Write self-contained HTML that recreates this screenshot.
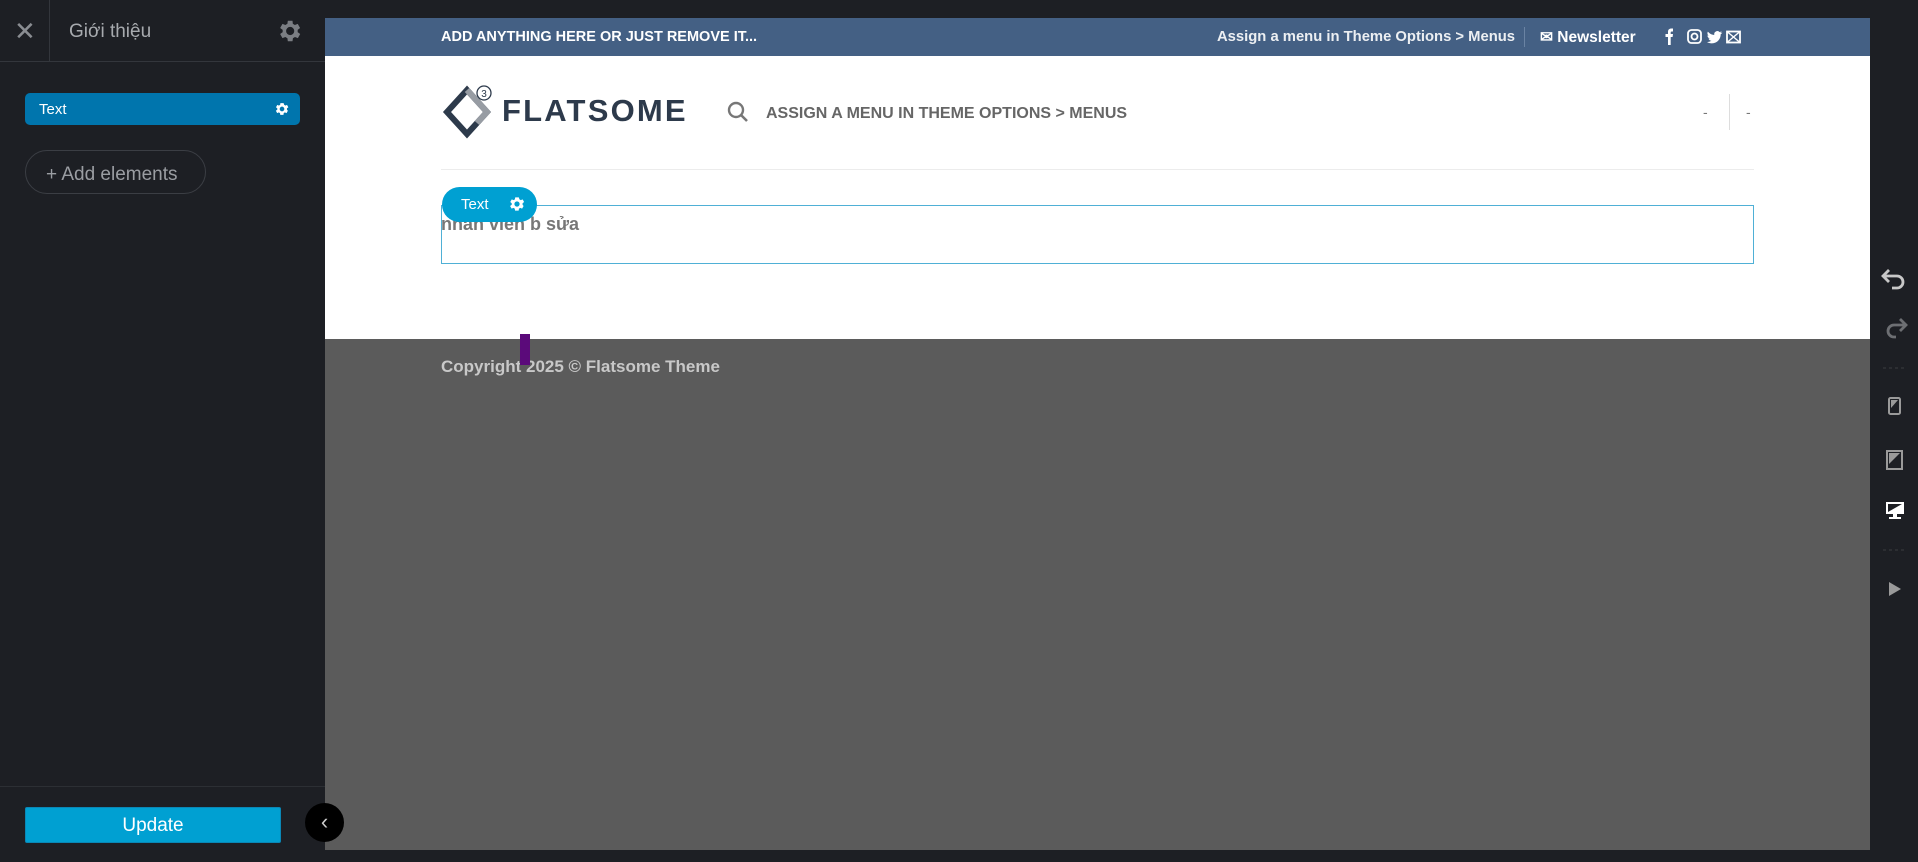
<!DOCTYPE html>
<html><head><meta charset="utf-8"><style>
*{margin:0;padding:0;box-sizing:border-box}
body{width:1918px;height:862px;background:#1d1f24;font-family:"Liberation Sans","Noto Sans CJK SC",sans-serif;position:relative;overflow:hidden}
.abs{position:absolute}
</style></head><body>
<!-- sidebar -->
<div class="abs" style="left:0;top:0;width:325px;height:862px;background:#1d1f24"></div>
<div class="abs" style="left:0;top:61px;width:325px;height:1px;background:#33363c"></div>
<div class="abs" style="left:49px;top:0;width:1px;height:61px;background:#33363c"></div>
<div class="abs" style="left:14px;top:16px;color:#8a8d92;font-size:26px;line-height:30px">✕</div>
<div class="abs" style="left:69px;top:21px;color:#a7aaae;font-size:19px">Giới thiệu</div>
<svg class="abs" style="left:275px;top:17px" width="28" height="28" viewBox="0 0 24 24"><path fill="#7b7e83" d="M19.4 13a7.5 7.5 0 000-2l2.1-1.6-2-3.5-2.5 1a7.4 7.4 0 00-1.7-1L15 3.2h-4l-.4 2.7a7.4 7.4 0 00-1.7 1l-2.5-1-2 3.5L6.6 11a7.5 7.5 0 000 2l-2.2 1.6 2 3.5 2.5-1a7.4 7.4 0 001.7 1l.4 2.7h4l.4-2.7a7.4 7.4 0 001.7-1l2.5 1 2-3.5zM13 15.5a3.5 3.5 0 110-7 3.5 3.5 0 010 7z"/></svg>
<div class="abs" style="left:25px;top:93px;width:275px;height:32px;background:#0075ad;border-radius:5px;color:#fff;font-size:15px;line-height:34px;padding-left:14px">Text</div>
<svg class="abs" style="left:274px;top:101px" width="16" height="16" viewBox="0 0 24 24"><path fill="#fff" d="M19.4 13a7.5 7.5 0 000-2l2.1-1.6-2-3.5-2.5 1a7.4 7.4 0 00-1.7-1L14.4 3.2h-4.8l-.4 2.7a7.4 7.4 0 00-1.7 1l-2.5-1-2 3.5L5 11a7.5 7.5 0 000 2l-2.2 1.6 2 3.5 2.5-1a7.4 7.4 0 001.7 1l.4 2.7h4.8l.4-2.7a7.4 7.4 0 001.7-1l2.5 1 2-3.5zM12 15.5a3.5 3.5 0 110-7 3.5 3.5 0 010 7z"/></svg>
<div class="abs" style="left:25px;top:150px;width:181px;height:44px;border:1px solid #3b3e44;border-radius:22px;color:#9a9da2;font-size:19px;line-height:47px;padding-left:20px">+ Add elements</div>
<div class="abs" style="left:0;top:786px;width:325px;height:1px;background:#2c2f34"></div>
<div class="abs" style="left:25px;top:807px;width:256px;height:36px;background:#00a0d2;border:1px solid #0a87b6;border-radius:2px;color:#fff;font-size:19px;line-height:36px;text-align:center">Update</div>
<!-- canvas -->
<div class="abs" style="left:325px;top:18px;width:1545px;height:832px;background:#5b5b5b"></div>
<div class="abs" style="left:325px;top:18px;width:1545px;height:38px;background:#446084"></div>
<div class="abs" style="left:441px;top:29px;color:#fff;font-size:14.5px;font-weight:bold">ADD ANYTHING HERE OR JUST REMOVE IT...</div>
<div class="abs" style="left:1217px;top:29px;color:#fff;font-size:14.8px;font-weight:bold;opacity:.9">Assign a menu in Theme Options &gt; Menus</div>
<div class="abs" style="left:1524px;top:27px;width:1px;height:20px;background:#6a83a3"></div>
<div class="abs" style="left:1540px;top:28px;color:#fff;font-size:15.5px;font-weight:bold">✉ Newsletter</div>
<svg class="abs" style="left:1660px;top:27px" width="82" height="20" viewBox="0 0 82 20">
<path d="M8 18V10H5.5V7H8V5c0-2.5 1.3-3.5 3.5-3.5H13V4.5h-1.2c-.9 0-1.1.4-1.1 1.1V7H13l-.4 3h-1.9v8z" fill="#fff"/>
<rect x="28" y="3" width="13" height="13" rx="3.5" fill="none" stroke="#fff" stroke-width="1.8"/><circle cx="34.5" cy="9.5" r="3" fill="none" stroke="#fff" stroke-width="1.8"/>
<path d="M62 5.5c-.6.3-1.2.4-1.8.5.7-.4 1.1-1 1.4-1.7-.6.4-1.3.6-2 .8a3.1 3.1 0 00-5.3 2.8c-2.6-.1-4.9-1.4-6.4-3.3-.9 1.5-.4 3.3.9 4.2-.5 0-1-.2-1.4-.4 0 1.5 1.1 2.8 2.5 3.1-.5.1-.9.2-1.4.1.4 1.3 1.6 2.1 2.9 2.2A6.3 6.3 0 0147 15c1.4.9 3 1.4 4.8 1.4 5.8 0 9-4.8 8.9-9.1.6-.5 1.1-1 1.5-1.6z" fill="#fff"/>
<rect x="67" y="4.5" width="13" height="11" fill="none" stroke="#fff" stroke-width="1.8"/><path d="M67 4.5l13 11M80 4.5l-13 11" stroke="#fff" stroke-width="1.4"/>
</svg>
<div class="abs" style="left:325px;top:56px;width:1545px;height:283px;background:#fff"></div>
<!-- logo -->
<svg class="abs" style="left:441px;top:84px" width="52" height="56" viewBox="0 0 52 56"><path d="M26 6 L6 28 L26 50 L46 28 Z" fill="none" stroke="#2d3a4b" stroke-width="6"/><path d="M26 6 L46 28 L36 39" fill="none" stroke="#979ca3" stroke-width="6"/><rect x="20" y="27" width="12" height="12" fill="#fff"/><circle cx="43" cy="9" r="7" fill="#fff" stroke="#2d3a4b" stroke-width="1.3"/><text x="43" y="13" font-size="10" text-anchor="middle" fill="#2d3a4b" font-family="Liberation Sans">3</text></svg>
<div class="abs" style="left:502px;top:93px;color:#2d3a4b;font-size:31px;font-weight:bold;letter-spacing:2.2px">FLATSOME</div>
<svg class="abs" style="left:727px;top:101px" width="22" height="22" viewBox="0 0 22 22"><circle cx="9" cy="9" r="7" fill="none" stroke="#777" stroke-width="2.4"/><path d="M14 14l6 6" stroke="#777" stroke-width="2.6"/></svg>
<div class="abs" style="left:766px;top:105px;color:#666;font-size:16px;font-weight:bold">ASSIGN A MENU IN THEME OPTIONS &gt; MENUS</div>
<div class="abs" style="left:1703px;top:104px;color:#777;font-size:14px">-</div>
<div class="abs" style="left:1729px;top:94px;width:1px;height:36px;background:#ddd"></div>
<div class="abs" style="left:1746px;top:104px;color:#777;font-size:14px">-</div>
<div class="abs" style="left:441px;top:169px;width:1313px;height:1px;background:#ececec"></div>
<div class="abs" style="left:441px;top:205px;width:1313px;height:59px;border:1px solid #4fb0d6"></div>
<div class="abs" style="left:441px;top:214px;color:#777;font-size:18px;font-weight:bold">nhân viên b sửa</div>
<div class="abs" style="left:442px;top:187px;width:95px;height:35px;background:#00a0d2;border-radius:18px;color:#fff;font-size:15px;line-height:35px;padding-left:19px">Text</div>
<svg class="abs" style="left:508px;top:195px" width="18" height="18" viewBox="0 0 24 24"><path fill="#fff" d="M19.4 13a7.5 7.5 0 000-2l2.1-1.6-2-3.5-2.5 1a7.4 7.4 0 00-1.7-1L14.4 3.2h-4.8l-.4 2.7a7.4 7.4 0 00-1.7 1l-2.5-1-2 3.5L5 11a7.5 7.5 0 000 2l-2.2 1.6 2 3.5 2.5-1a7.4 7.4 0 001.7 1l.4 2.7h4.8l.4-2.7a7.4 7.4 0 001.7-1l2.5 1 2-3.5zM12 15.5a3.5 3.5 0 110-7 3.5 3.5 0 010 7z"/></svg>
<div class="abs" style="left:441px;top:357px;color:#c8c8c8;font-size:17px;font-weight:bold">Copyright 2025 © Flatsome Theme</div>
<div class="abs" style="left:520px;top:334px;width:10px;height:31px;background:#5b0a7a"></div>
<!-- collapse -->
<div class="abs" style="left:305px;top:803px;width:39px;height:39px;border-radius:50%;background:#000;color:#ccc;font-size:22px;line-height:37px;text-align:center">‹</div>
<!-- right toolbar -->
<svg class="abs" style="left:1870px;top:256px" width="48" height="345" viewBox="0 0 48 345">
<path d="M19 14 L13 20 L19 26 M13 20 H27 A6 6 0 0 1 27 32 H22" fill="none" stroke="#c8c8c8" stroke-width="2.8"/>
<path d="M30 63 L36 69 L30 75 M36 69 H24 A6 6 0 0 0 24 81 H26" fill="none" stroke="#6d6f73" stroke-width="2.8"/>
<path d="M13 112 H35" stroke="#3a3c40" stroke-dasharray="3 3"/>
<rect x="19" y="142" width="11" height="16" rx="1.5" fill="none" stroke="#9a9a9a" stroke-width="2"/><path d="M21 144h7l-7 8z" fill="#9a9a9a"/>
<rect x="17" y="195" width="15" height="18" fill="none" stroke="#9a9a9a" stroke-width="2"/><path d="M19 197h11l-11 11z" fill="#9a9a9a"/>
<rect x="16" y="246" width="18" height="12" fill="#fff"/><path d="M18 248h14v8h-14z" fill="#1d1f24"/><path d="M18 256 L32 248 V256z" fill="#fff"/><rect x="23" y="258" width="4" height="3" fill="#fff"/><rect x="19" y="261" width="12" height="2" fill="#fff"/>
<path d="M13 294 H35" stroke="#3a3c40" stroke-dasharray="3 3"/>
<path d="M19 326 L31 333 L19 340z" fill="#9a9a9a"/>
</svg>
</body></html>
